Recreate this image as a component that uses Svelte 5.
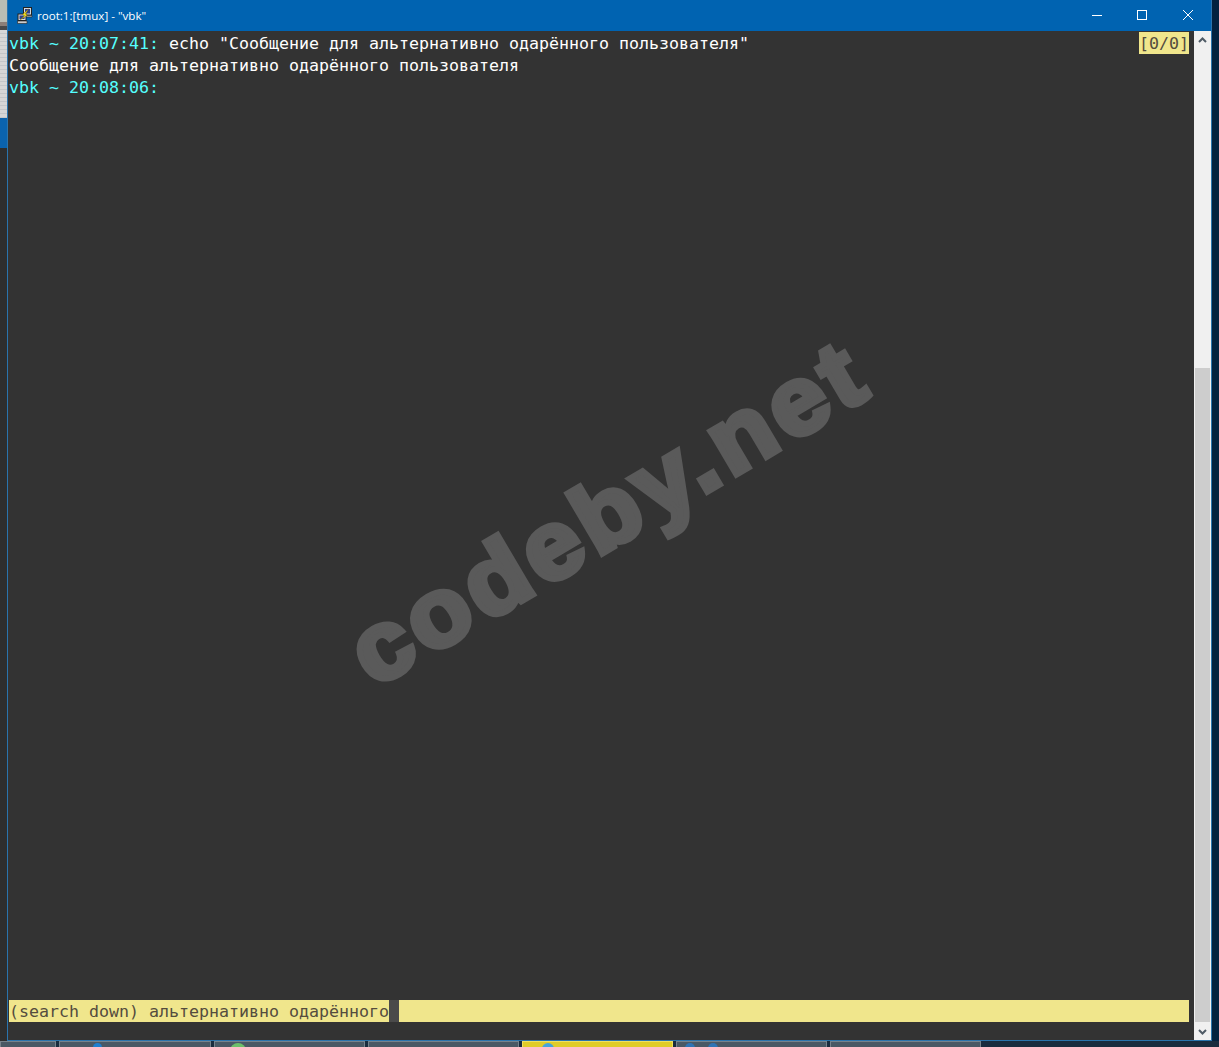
<script lang="ts">
  const tabs = [
    { width: 56, active: false, marks: [] },
    { width: 152, active: false, marks: [{ color: '#1e7fd0', left: 33, size: 9 }] },
    { width: 151, active: false, marks: [{ color: '#6cc06a', left: 15, size: 16 }] },
    { width: 151, active: false, marks: [] },
    { width: 151, active: true, marks: [{ color: '#45a5dc', left: 19, size: 12 }] },
    {
      width: 151,
      active: false,
      marks: [
        { color: '#2f74b5', left: 8, size: 10 },
        { color: '#2f74b5', left: 31, size: 10 }
      ]
    },
    { width: 151, active: false, marks: [] }
  ]
</script>

<div class="screen">
  <div class="desk">
    <div class="behind">
      <div class="behind-top"></div>
      <div class="behind-panel"></div>
      <div class="behind-blue"></div>
      <div class="behind-dark"></div>
    </div>

    <div class="window">
      <header class="titlebar">
        <svg class="app-icon" width="16" height="17" viewBox="0 0 16 17" aria-hidden="true">
          <rect x="6.5" y="0.5" width="8" height="7.5" fill="#d8d8d8" stroke="#222" />
          <rect x="8" y="2" width="5" height="4.5" fill="#2d3f8c" />
          <path d="M6 8.5h9v1.5H6z" fill="#bbb" stroke="#222" stroke-width="0.6" />
          <rect x="1" y="7" width="8" height="6.5" fill="#d8d8d8" stroke="#222" />
          <rect x="2.5" y="8.5" width="5" height="3.5" fill="#2d3f8c" />
          <path d="M0.5 14h9.5v2.5H0.5z" fill="#ccc" stroke="#222" stroke-width="0.6" />
          <path d="M11.5 2 5.5 7.5 7.5 8.5 3 13 10.5 8 8.5 7z" fill="#f6e020" stroke="#6a5a00" stroke-width="0.4" />
        </svg>
        <span class="title">root:1:[tmux] - "vbk"</span>
        <div class="controls">
          <svg width="46" height="31" viewBox="0 0 46 31" aria-hidden="true"><path d="M19 15.5h10" stroke="#fff" /></svg>
          <svg width="46" height="31" viewBox="0 0 46 31" aria-hidden="true"><rect x="18.5" y="10.5" width="9" height="9" fill="none" stroke="#fff" /></svg>
          <svg width="46" height="31" viewBox="0 0 46 31" aria-hidden="true"><path d="M18 10l10 10M28 10l-10 10" stroke="#fff" /></svg>
        </div>
      </header>

      <div class="body">
        <main class="term">
          <div class="row">
            <span class="line"><span class="prompt">vbk ~ 20:07:41:</span> echo "Сообщение для альтернативно одарённого пользователя"</span>
            <span class="count">[0/0]</span>
          </div>
          <div class="row"><span class="line">Сообщение для альтернативно одарённого пользователя</span></div>
          <div class="row"><span class="line"><span class="prompt">vbk ~ 20:08:06:</span></span></div>

          <div class="status">
            <span class="search">(search down) альтернативно одарённого</span>
            <span class="cursor"></span>
            <span class="fill"></span>
          </div>

          <div class="watermark">codeby.net</div>
        </main>

        <aside class="scrollbar">
          <div class="arrow">
            <svg width="9" height="6" viewBox="0 0 9 6" aria-hidden="true"><path d="M1 5 4.5 1.5 8 5" fill="none" stroke="#4f5b66" stroke-width="2" /></svg>
          </div>
          <div class="track"><div class="thumb"></div></div>
          <div class="arrow">
            <svg width="9" height="6" viewBox="0 0 9 6" aria-hidden="true"><path d="M1 1 4.5 4.5 8 1" fill="none" stroke="#4f5b66" stroke-width="2" /></svg>
          </div>
        </aside>
      </div>
    </div>

    <div class="edge"></div>
  </div>

  <div class="taskbar">
    {#each tabs as tab}
      <div class="tab" class:active={tab.active} style="width: {tab.width}px">
        {#each tab.marks as mark}
          <span class="mark" style="background: {mark.color}; left: {mark.left}px; width: {mark.size}px; height: {mark.size}px"></span>
        {/each}
      </div>
    {/each}
  </div>
</div>

<style>
  :global(body) {
    margin: 0;
    background: #1a2c3e;
  }

  .screen {
    width: 1219px;
    height: 1047px;
    overflow: hidden;
    display: flex;
    flex-direction: column;
    background: #1a2c3e;
  }

  .desk {
    display: flex;
    height: 1041px;
    flex-shrink: 0;
  }

  .behind {
    width: 7px;
    display: flex;
    flex-direction: column;
    flex-shrink: 0;
  }

  .behind-top {
    height: 30px;
    background: linear-gradient(#b9bdb4 0 22px, #8c7f78 22px 26px, #4a4a4a 26px);
  }

  .behind-panel {
    height: 88px;
    background: repeating-linear-gradient(#d6d6d6 0 3px, #c4c6c8 3px 4px);
  }

  .behind-blue {
    height: 30px;
    background: #0a63ae;
  }

  .behind-dark {
    flex: 1;
    background: #2e2e2e;
  }

  .edge {
    flex: 1;
    background: #03223f;
  }

  .window {
    width: 1205px;
    flex-shrink: 0;
    box-sizing: border-box;
    display: flex;
    flex-direction: column;
    border: 1px solid #2a74ad;
    border-top: none;
  }

  .titlebar {
    height: 31px;
    flex-shrink: 0;
    display: flex;
    align-items: center;
    background: #0063b1;
    color: #fff;
  }

  .app-icon {
    margin-left: 9px;
    flex-shrink: 0;
  }

  .title {
    margin-left: 4px;
    font-family: "Open Sans", sans-serif;
    font-size: 11.6px;
    white-space: pre;
  }

  .controls {
    margin-left: auto;
    display: flex;
  }

  .controls svg {
    display: block;
  }

  .body {
    flex: 1;
    min-height: 0;
    display: flex;
  }

  .term {
    position: relative;
    flex: 1;
    min-width: 0;
    box-sizing: border-box;
    display: flex;
    flex-direction: column;
    padding: 1px 5px 18px 1px;
    background: #333;
    color: #fff;
    font-family: "DejaVu Sans Mono", monospace;
    font-size: 16.61px;
    line-height: 24px;
  }

  .row {
    height: 22px;
    display: flex;
    justify-content: space-between;
  }

  .line {
    white-space: pre;
  }

  .prompt {
    color: #55ffff;
  }

  .count,
  .search,
  .fill {
    overflow: hidden;
    background: #f0e68c;
    color: #544c3e;
  }

  .status {
    margin-top: auto;
    height: 22px;
    display: flex;
  }

  .search {
    white-space: pre;
  }

  .cursor {
    width: 10px;
    flex-shrink: 0;
    background: #4a4a4a;
  }

  .fill {
    flex: 1;
  }

  .watermark {
    position: absolute;
    left: 0;
    top: 0;
    width: 700px;
    height: 120px;
    transform: translate(250px, 421px) rotate(-30.5deg) scaleX(1.06);
    text-align: center;
    font-family: "Liberation Sans", sans-serif;
    font-weight: 700;
    font-size: 96px;
    line-height: 120px;
    letter-spacing: 5px;
    color: #5a5a5a;
    -webkit-text-stroke: 6px #5a5a5a;
    pointer-events: none;
  }

  .scrollbar {
    width: 17px;
    flex-shrink: 0;
    display: flex;
    flex-direction: column;
    background: #f0f0f0;
  }

  .arrow {
    height: 17px;
    flex-shrink: 0;
    display: flex;
    align-items: center;
    justify-content: center;
  }

  .track {
    flex: 1;
    display: flex;
    flex-direction: column;
    justify-content: flex-end;
    margin-bottom: 1px;
  }

  .thumb {
    height: 654px;
    margin: 0 1px;
    background: #cdcdcd;
  }

  .taskbar {
    flex: 1;
    display: flex;
    gap: 3px;
    align-items: flex-start;
  }

  .tab {
    position: relative;
    height: 6px;
    box-sizing: border-box;
    flex-shrink: 0;
    overflow: hidden;
    background: #4a5965;
    border: 1px solid #76828b;
    border-bottom: none;
  }

  .tab.active {
    background: #e0cc28;
    border-color: #f0e060;
  }

  .mark {
    position: absolute;
    top: 1px;
    border-radius: 50%;
  }
</style>
